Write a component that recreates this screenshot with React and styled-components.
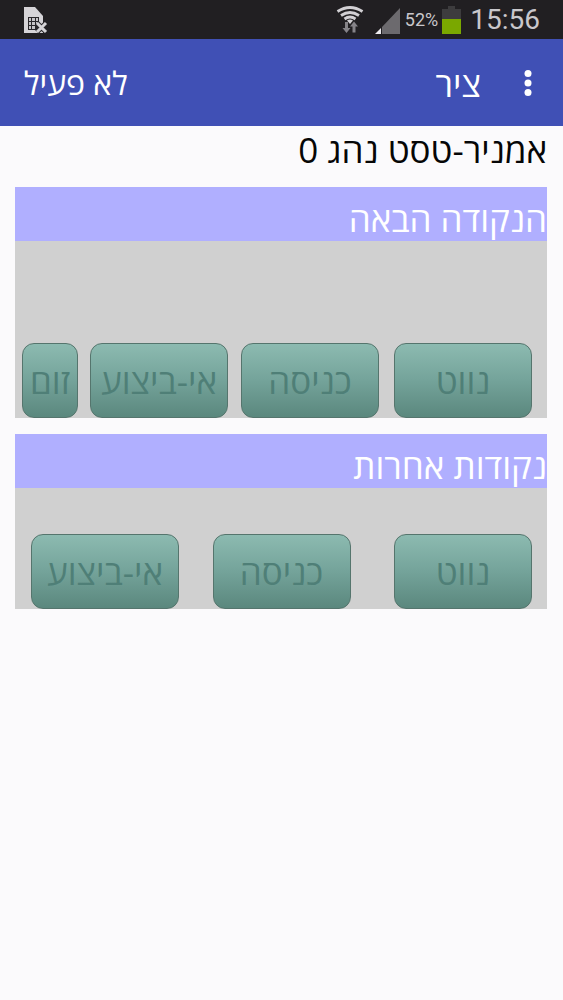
import React from 'react';
import styled, { createGlobalStyle } from 'styled-components';

const nextPointActions = [
  { label: 'נווט', basis: 138, before: 15 },
  { label: 'כניסה', basis: 138, before: 15 },
  { label: 'אי-ביצוע', basis: 138, before: 13 },
  { label: 'זום', basis: 56, before: 12 },
];

const otherPointActions = [
  { label: 'נווט', width: 138, side: 'start' },
  { label: 'כניסה', width: 138, side: 'center' },
  { label: 'אי-ביצוע', width: 148, side: 'end' },
];

function SimIcon() {
  return (
    <svg width="25" height="28" viewBox="0 0 25 28" aria-hidden="true">
      <path d="M1 1h11l8 9v17H1z" fill="#d6d4d8" />
      <path d="M5 11h11v13H5z" fill="#29272b" />
      <path
        d="M6 12h2v3H6zM9 12h3v3H9zM13 12h2v3h-2zM6 16h2v3H6zM9 16h3v3H9zM13 16h2v3h-2zM6 20h2v3H6zM9 20h3v3H9z"
        fill="#c6c4c8"
      />
      <path d="M14 17l9 9M23 17l-9 9" stroke="#29272b" strokeWidth="5" />
      <path d="M14 17l9 9M23 17l-9 9" stroke="#d6d4d8" strokeWidth="3" />
    </svg>
  );
}

function WifiIcon() {
  return (
    <svg width="28" height="30" viewBox="0 0 28 30" aria-hidden="true">
      <g fill="none" stroke="#d2d0d4" strokeWidth="2.8">
        <path d="M1.5 6.5Q14 -1.5 26.5 6.5" />
        <path d="M5 10.5Q14 4.5 23 10.5" />
        <path d="M8.5 14Q14 10 19.5 14" />
      </g>
      <path d="M11 15.5q3-2 6 0l-3 3.5z" fill="#d2d0d4" />
      <path d="M9 17h3v6h2.5l-4 5-4-5H9z" fill="#858388" />
      <path d="M16.5 27.5h3v-6H22l-4-5-4 5h2.5z" fill="#858388" />
    </svg>
  );
}

function SignalIcon() {
  return (
    <svg width="26" height="28" viewBox="0 0 26 28" aria-hidden="true">
      <path d="M25 2v26H7V21z" fill="#6c6a6e" />
      <path d="M0 28l6-6v6z" fill="#eeecf0" />
    </svg>
  );
}

function BatteryIcon() {
  return (
    <svg width="20" height="28" viewBox="0 0 20 28" aria-hidden="true">
      <path d="M6 0h7v3h6v11H0V3h6z" fill="#3d3c3e" />
      <path d="M0 13h19v15H0z" fill="#7aa800" />
    </svg>
  );
}

function App() {
  return (
    <Screen>
      <GlobalStyle />
      <StatusBar>
        <SimIcon />
        <StatusGroup>
          <WifiIcon />
          <Reception>
            <SignalIcon />
            <Percent>52%</Percent>
            <BatteryIcon />
          </Reception>
          <Clock>15:56</Clock>
        </StatusGroup>
      </StatusBar>
      <AppBar>
        <MenuButton type="button" aria-label="תפריט">
          <svg width="10" height="28" viewBox="0 0 10 28" fill="#fff" aria-hidden="true">
            <circle cx="5" cy="4.5" r="3.5" />
            <circle cx="5" cy="14" r="3.5" />
            <circle cx="5" cy="23.5" r="3.5" />
          </svg>
        </MenuButton>
        <Title>ציר</Title>
        <Status type="button">לא פעיל</Status>
      </AppBar>
      <Content>
        <Driver>אמניר-טסט נהג 0</Driver>
        <Section>
          <SectionTitle>הנקודה הבאה</SectionTitle>
          <NextActions>
            {nextPointActions.map(({ label, basis, before }) => (
              <NextButton key={label} type="button" disabled $basis={basis} $before={before}>
                {label}
              </NextButton>
            ))}
          </NextActions>
        </Section>
        <Section>
          <SectionTitle>נקודות אחרות</SectionTitle>
          <OtherActions>
            {otherPointActions.map(({ label, width, side }) => (
              <OtherButton key={label} type="button" disabled $width={width} $side={side}>
                {label}
              </OtherButton>
            ))}
          </OtherActions>
        </Section>
      </Content>
    </Screen>
  );
}

export default App;

const GlobalStyle = createGlobalStyle`
  * {
    box-sizing: border-box;
  }
  body {
    margin: 0;
    background: #fbfafc;
  }
  button {
    font-family: inherit;
  }
`;
const Screen = styled.div`
  min-height: 100vh;
  background: #fbfafc;
  color: #060606;
  direction: rtl;
  font-family: 'Open Sans', 'Noto Sans', sans-serif;
`;
const StatusBar = styled.div`
  display: flex;
  direction: ltr;
  align-items: center;
  justify-content: space-between;
  height: 39px;
  padding: 0 23px;
  background: #211f22;
  font-family: Roboto, sans-serif;
`;
const StatusGroup = styled.div`
  display: flex;
  align-items: center;
`;
const Reception = styled.div`
  display: flex;
  align-items: center;
  margin: 0 8px 0 11px;
`;
const Percent = styled.span`
  margin: 0 4px;
  color: #c9c7cb;
  font-size: 18px;
`;
const Clock = styled.span`
  color: #c9c7cb;
  font-size: 28px;
  line-height: 38px;
`;
const AppBar = styled.header`
  display: flex;
  align-items: center;
  height: 87px;
  padding: 0 24px;
  background: #4050b5;
  color: #fff;
`;
const MenuButton = styled.button`
  display: flex;
  padding: 0 6px;
  border: none;
  background: transparent;
`;
const Title = styled.h1`
  flex: 1;
  margin: 0;
  padding: 2px 36px 0 0;
  font-size: 35px;
  font-weight: 400;
  line-height: 48px;
`;
const Status = styled.button`
  padding: 0;
  border: none;
  background: transparent;
  color: #fff;
  font-size: 32px;
`;
const Content = styled.main`
  display: flex;
  flex-direction: column;
  gap: 16px;
  padding: 0 16px 16px 15px;
`;
const Driver = styled.div`
  height: 45px;
  font-size: 35px;
  line-height: 48px;
`;
const Section = styled.section`
  background: #d0d0d0;
`;
const SectionTitle = styled.h2`
  height: 54px;
  margin: 0;
  padding-top: 8px;
  background: #b0afff;
  color: #fff;
  font-size: 35px;
  font-weight: 400;
  line-height: 48px;
`;
const NextActions = styled.div`
  display: flex;
  padding: 102px 0 0 7px;
`;
const OtherActions = styled.div`
  display: grid;
  grid-template-columns: 1fr auto 1fr;
  padding: 46px 15px 0 16px;
`;
const ActionButton = styled.button`
  height: 75px;
  padding: 0;
  border: 1px solid #55756d;
  border-radius: 12px;
  background: linear-gradient(#8dbbb1, #74a39a 50%, #5a877d) border-box;
  color: #4f7f77;
  font-size: 35px;
  white-space: nowrap;
`;
const NextButton = styled(ActionButton)`
  flex: 1 1 ${(props) => props.$basis}px;
  margin-right: ${(props) => props.$before}px;
`;
const OtherButton = styled(ActionButton)`
  width: ${(props) => props.$width}px;
  justify-self: ${(props) => props.$side};
`;
